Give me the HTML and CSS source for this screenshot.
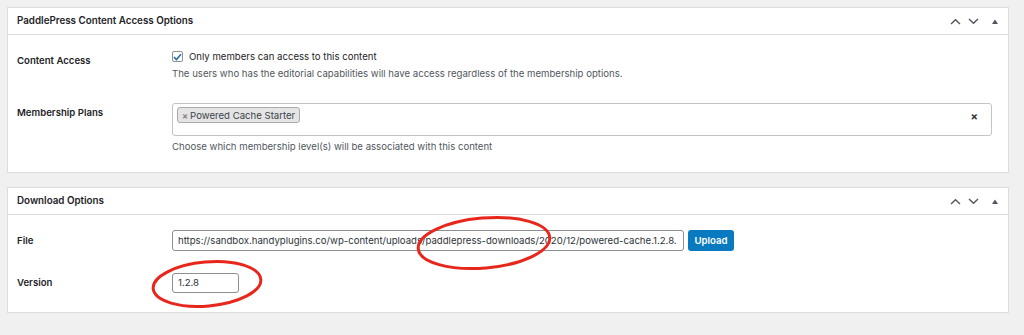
FILE: index.html
```html
<!DOCTYPE html>
<html>
<head>
<meta charset="utf-8">
<link rel="stylesheet" href="styles.css">
</head>
<body>
<div class="page">
  <section class="postbox">
    <div class="postbox-header">
      <h2 class="hndle">PaddlePress Content Access Options</h2>
      <div class="handle-actions">
        <svg class="ico" width="11" height="7" viewBox="0 0 11 7"><path d="M1 6 L5.5 1.8 L10 6" fill="none" stroke="#50575e" stroke-width="1.4"/></svg>
        <svg class="ico" width="11" height="7" viewBox="0 0 11 7"><path d="M1 1 L5.5 5.2 L10 1" fill="none" stroke="#50575e" stroke-width="1.4"/></svg>
        <svg class="ico tri" width="6" height="5" viewBox="0 0 6 5"><path d="M0 5 L3 0.5 L6 5 Z" fill="#50575e"/></svg>
      </div>
    </div>
    <div class="inside">
      <div class="row row-access">
        <div class="label lbl-access">Content Access</div>
        <div class="field">
          <label class="check-line"><span class="checkbox"><svg width="9" height="8" viewBox="0 0 9 8"><path d="M1 4.2 L3.4 6.5 L8 1.2" fill="none" stroke="#2271b1" stroke-width="1.6"/></svg></span>Only members can access to this content</label>
          <p class="desc">The users who has the editorial capabilities will have access regardless of the membership options.</p>
        </div>
      </div>
      <div class="row row-plans">
        <div class="label lbl-plans">Membership Plans</div>
        <div class="field">
          <div class="select2">
            <span class="tag"><span class="tag-x">×</span>Powered Cache Starter</span>
            <span class="clear">×</span>
          </div>
          <p class="desc desc-plans">Choose which membership level(s) will be associated with this content</p>
        </div>
      </div>
    </div>
  </section>

  <section class="postbox">
    <div class="postbox-header">
      <h2 class="hndle">Download Options</h2>
      <div class="handle-actions">
        <svg class="ico" width="11" height="7" viewBox="0 0 11 7"><path d="M1 6 L5.5 1.8 L10 6" fill="none" stroke="#50575e" stroke-width="1.4"/></svg>
        <svg class="ico" width="11" height="7" viewBox="0 0 11 7"><path d="M1 1 L5.5 5.2 L10 1" fill="none" stroke="#50575e" stroke-width="1.4"/></svg>
        <svg class="ico tri" width="6" height="5" viewBox="0 0 6 5"><path d="M0 5 L3 0.5 L6 5 Z" fill="#50575e"/></svg>
      </div>
    </div>
    <div class="inside inside-dl">
      <div class="row row-file">
        <div class="label lbl-file">File</div>
        <div class="field field-inline">
          <div class="input input-file">https://sandbox.handyplugins.co/wp-content/uploads/paddlepress-downloads/2020/12/powered-cache.1.2.8.</div>
          <span class="btn">Upload</span>
        </div>
      </div>
      <div class="row row-version">
        <div class="label lbl-version">Version</div>
        <div class="field">
          <div class="input input-version">1.2.8</div>
        </div>
      </div>
      <svg class="mark mark-file" width="150" height="62" viewBox="0 0 150 62"><ellipse cx="75" cy="31" rx="66" ry="25" transform="rotate(-5 75 31)" fill="none" stroke="#e8271c" stroke-width="3"/></svg>
      <svg class="mark mark-version" width="124" height="56" viewBox="0 0 124 56"><ellipse cx="62" cy="28" rx="54" ry="22" transform="rotate(-5 62 28)" fill="none" stroke="#e8271c" stroke-width="3"/></svg>
    </div>
  </section>
</div>
</body>
</html>
```

FILE: styles.css
```css
* { box-sizing: border-box; }
html, body { margin: 0; padding: 0; }
body {
  background: #f0f0f1;
  font-family: "Inter", "Liberation Sans", Arial, sans-serif;
  font-size: 9.6px;
  color: #1d2327;
}
.page {
  padding: 7px 15px 0 7px;
  display: flex;
  flex-direction: column;
  gap: 14px;
}
.postbox {
  background: #fff;
  border: 1px solid #dcdcde;
}
.postbox-header {
  height: 27px;
  border-bottom: 1px solid #dcdcde;
  display: flex;
  align-items: center;
  justify-content: space-between;
  padding: 0 9px 0 9px;
}
.hndle {
  margin: 0;
  font-size: 9.8px;
  font-weight: 600;
  line-height: 1;
}
.handle-actions {
  display: flex;
  align-items: center;
  gap: 7px;
}
.ico { display: block; }
.ico.tri { margin-left: 6px; margin-right: 1px; }
.inside {
  padding: 0 16px 0 9px;
  position: relative;
}
.row {
  display: grid;
  grid-template-columns: 155px 1fr;
}
.label {
  font-weight: 600;
  line-height: 17px;
}
.row-access { padding-top: 13px; padding-bottom: 11px; }
.lbl-access { padding-top: 4px; }
.check-line {
  display: flex;
  align-items: center;
  line-height: 17px;
  height: 17px;
}
.checkbox {
  width: 11px;
  height: 11px;
  border: 1px solid #8c8f94;
  border-radius: 2px;
  display: inline-flex;
  align-items: center;
  justify-content: center;
  margin-right: 6px;
  background: #fff;
}
.checkbox svg { display: block; }
.desc {
  margin: 0;
  color: #50575e;
  line-height: 17px;
}
.row-plans { padding-top: 10px; padding-bottom: 17px; }
.lbl-plans { padding-top: 1px; }
.select2 {
  height: 33px;
  border: 1px solid #c3c4c7;
  border-radius: 3px;
  padding: 3px 0 0 4px;
  display: flex;
  align-items: flex-start;
  justify-content: space-between;
}
.tag {
  display: inline-flex;
  align-items: center;
  height: 16px;
  padding: 0 4px 0 4px;
  background: #e4e4e4;
  border: 1px solid #aaa;
  border-radius: 3px;
  color: #3c434a;
}
.tag-x {
  color: #888;
  font-size: 9px;
  font-weight: 700;
  margin-right: 2px;
}
.clear {
  font-weight: 700;
  font-size: 11px;
  margin: 2px 13px 0 0;
  color: #333;
}
.desc-plans { margin-top: 2px; }
.inside-dl { padding-bottom: 19px; }
.row-file { padding-top: 15px; }
.field-inline {
  display: flex;
  align-items: center;
  gap: 4px;
}
.lbl-file { padding-top: 2px; }
.input {
  height: 21px;
  border: 1px solid #8c8f94;
  border-radius: 3px;
  padding: 0 5px;
  line-height: 19px;
  color: #2c3338;
  white-space: nowrap;
  overflow: hidden;
  background: #fff;
}
.input-file { width: 512px; }
.btn {
  height: 21px;
  width: 46px;
  border-radius: 3px;
  background: #0a7ac0;
  color: #fff;
  font-weight: 600;
  display: inline-flex;
  align-items: center;
  justify-content: center;
}
.row-version { padding-top: 22px; }
.lbl-version { padding-top: 1px; }
.input-version { width: 67px; height: 20px; line-height: 18px; }
.mark { position: absolute; pointer-events: none; }
.mark-file { left: 401px; top: -3px; }
.mark-version { left: 137px; top: 41px; }
```
